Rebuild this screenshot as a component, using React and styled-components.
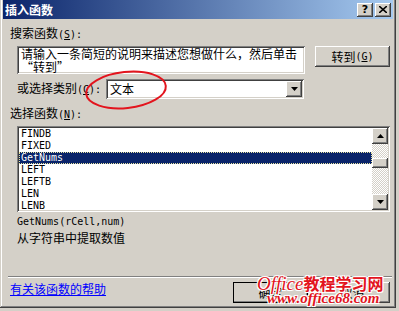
import React from 'react'
import styled, { createGlobalStyle } from 'styled-components'

const GlobalStyle = createGlobalStyle`
  html, body {
    margin: 0;
    padding: 0;
    background: #d4d0c8;
  }
  body {
    font-family: "Noto Sans CJK SC", "Liberation Sans", sans-serif;
    font-size: 12px;
    color: #000;
  }
`

const raised = `
  box-shadow: inset -1px -1px #404040, inset 1px 1px #ffffff,
    inset -2px -2px #808080, inset 2px 2px #d4d0c8;
`

const sunken = `
  box-shadow: inset 1px 1px #808080, inset -1px -1px #ffffff,
    inset 2px 2px #404040, inset -2px -2px #d4d0c8;
`

const Window = styled.div`
  position: relative;
  box-sizing: border-box;
  width: 396px;
  height: 308px;
  padding: 0 3px 3px 3px;
  background: #d4d0c8;
  box-shadow: inset -1px -1px #404040, inset 1px 0 #d4d0c8,
    inset -2px -2px #808080, inset 2px 0 #ffffff;
  overflow: hidden;
`

const TitleBar = styled.div`
  display: flex;
  align-items: center;
  height: 19px;
  padding: 0 2px;
  background: linear-gradient(to right, #0a246a, #a6caf0);
`

const Title = styled.div`
  flex: 1;
  color: #fff;
  font-weight: bold;
  font-size: 12px;
  line-height: 12px;
`

const CapButton = styled.div`
  box-sizing: border-box;
  width: 16px;
  height: 14px;
  margin-left: ${p => (p.$gap ? '2px' : '0')};
  background: #d4d0c8;
  ${raised}
  display: flex;
  align-items: center;
  justify-content: center;
  font-family: "DejaVu Sans", sans-serif;
  font-weight: bold;
  font-size: 11px;
  line-height: 11px;
  color: #000;
`

const Body = styled.div`
  display: flex;
  flex-direction: column;
  padding: 0 3px 0 7px;
`

const Label = styled.div`
  height: 12px;
  line-height: 12px;
  margin-top: ${p => p.$top || 0}px;
  white-space: nowrap;
`

const Latin = styled.span`
  font-family: "DejaVu Sans Mono", "Liberation Mono", monospace;
  font-size: 10px;
`

const Key = styled.u`
  text-underline-offset: 1px;
`

const SearchRow = styled.div`
  display: flex;
  align-items: flex-start;
  margin-top: 7px;
  padding-left: 7px;
`

const SearchBox = styled.div`
  box-sizing: border-box;
  width: 288px;
  height: 28px;
  padding: 1px 3px 0 4px;
  background: #fff;
  ${sunken}
  line-height: 13px;
  white-space: nowrap;
  overflow: hidden;
`

const Button = styled.div`
  box-sizing: border-box;
  width: 75px;
  height: 21px;
  margin-left: ${p => p.$left || 0}px;
  background: #d4d0c8;
  ${raised}
  ${p => p.$default && 'outline: 1px solid #000; outline-offset: -1px;'}
  display: flex;
  align-items: center;
  justify-content: center;
  line-height: 12px;
  white-space: nowrap;
`

const CategoryRow = styled.div`
  display: flex;
  align-items: center;
  margin-top: 5px;
  padding-left: 7px;
  height: 20px;
`

const CategoryLabel = styled.div`
  width: 89px;
  line-height: 12px;
  white-space: nowrap;
`

const Select = styled.div`
  box-sizing: border-box;
  display: flex;
  align-items: center;
  width: 198px;
  height: 20px;
  padding: 2px 2px 2px 4px;
  background: #fff;
  ${sunken}
`

const SelectValue = styled.div`
  flex: 1;
  line-height: 12px;
`

const ArrowButton = styled.div`
  box-sizing: border-box;
  width: 16px;
  height: 16px;
  background: #d4d0c8;
  ${raised}
  display: flex;
  align-items: center;
  justify-content: center;
`

const List = styled.div`
  box-sizing: border-box;
  display: flex;
  width: 373px;
  height: 86px;
  margin: 7px 0 0 7px;
  padding: 2px;
  background: #fff;
  ${sunken}
`

const Items = styled.div`
  flex: 1;
  overflow: hidden;
`

const Item = styled.div`
  box-sizing: border-box;
  height: 12px;
  padding-left: 2px;
  font-family: "DejaVu Sans Mono", "Liberation Mono", monospace;
  font-size: 10px;
  line-height: 12px;
  color: ${p => (p.$selected ? '#fff' : '#000')};
  background: ${p => (p.$selected ? '#0a246a' : 'transparent')};
  ${p => p.$selected && 'outline: 1px dotted #e8e4a0; outline-offset: -1px;'}
`

const ScrollBar = styled.div`
  display: flex;
  flex-direction: column;
  width: 16px;
  background-color: #ffffff;
  background-image: repeating-conic-gradient(#d4d0c8 0 25%, #ffffff 0 50%);
  background-size: 2px 2px;
`

const ScrollButton = styled.div`
  box-sizing: border-box;
  width: 16px;
  height: 16px;
  background: #d4d0c8;
  ${raised}
  display: flex;
  align-items: center;
  justify-content: center;
`

const Thumb = styled.div`
  box-sizing: border-box;
  width: 16px;
  height: 10px;
  margin-top: 14px;
  background: #d4d0c8;
  ${raised}
`

const Track = styled.div`
  flex: 1;
`

const Syntax = styled.div`
  margin: 4px 0 0 7px;
  height: 12px;
  font-family: "DejaVu Sans Mono", "Liberation Mono", monospace;
  font-size: 10px;
  line-height: 12px;
`

const Description = styled.div`
  margin: 4px 0 0 7px;
  height: 12px;
  line-height: 12px;
`

const Separator = styled.div`
  height: 1px;
  margin: 32px -2px 0 -2px;
  border-top: 1px solid #808080;
  border-bottom: 1px solid #ffffff;
  height: 0;
`

const Footer = styled.div`
  display: flex;
  align-items: flex-start;
  margin-top: 4px;
`

const HelpLink = styled.a`
  flex: 1;
  margin-top: 1px;
  color: #0000ff;
  text-decoration: underline;
  text-underline-offset: 1px;
  line-height: 12px;
  cursor: pointer;
`

const Ring = styled.svg`
  position: absolute;
  left: 82px;
  top: 68px;
  pointer-events: none;
`

const Watermark = styled.div`
  position: absolute;
  left: 257px;
  top: 276px;
  color: #e3141d;
  text-shadow: -1px -1px 0 #fff, 1px -1px 0 #fff, -1px 1px 0 #fff, 1px 1px 0 #fff;
  white-space: nowrap;
  pointer-events: none;
`

const MarkTop = styled.div`
  display: flex;
  align-items: baseline;
  line-height: 14px;
`

const MarkOffice = styled.span`
  font-family: "Liberation Serif", serif;
  font-style: italic;
  font-size: 19px;
`

const MarkCn = styled.span`
  font-family: "Noto Sans CJK SC", sans-serif;
  font-weight: bold;
  font-size: 16px;
  letter-spacing: 0px;
`

const MarkUrl = styled.div`
  margin: 0 0 0 10px;
  font-family: "Liberation Serif", serif;
  font-style: italic;
  font-weight: bold;
  font-size: 15px;
  line-height: 14px;
`

const Triangle = ({ down }) => (
  <svg width='7' height='4' viewBox='0 0 7 4'>
    <path d={down ? 'M0 0h7L3.5 4z' : 'M3.5 0L7 4H0z'} fill='#000' />
  </svg>
)

const functions = ['FINDB', 'FIXED', 'GetNums', 'LEFT', 'LEFTB', 'LEN', 'LENB']

export default function App () {
  return (
    <>
      <GlobalStyle />
      <Window>
        <TitleBar>
          <Title>插入函数</Title>
          <CapButton>?</CapButton>
          <CapButton $gap>
            <svg width='8' height='7' viewBox='0 0 8 7'>
              <path d='M0 0l8 7M8 0L0 7' stroke='#000' strokeWidth='1.6' />
            </svg>
          </CapButton>
        </TitleBar>
        <Body>
          <Label $top={8}>
            搜索函数<Latin>(<Key>S</Key>):</Latin>
          </Label>
          <SearchRow>
            <SearchBox>
              请输入一条简短的说明来描述您想做什么，然后单击
              <br />
              “转到”
            </SearchBox>
            <Button $left={10}>
              转到<Latin>(<Key>G</Key>)</Latin>
            </Button>
          </SearchRow>
          <CategoryRow>
            <CategoryLabel>
              或选择类别<Latin>(<Key>C</Key>):</Latin>
            </CategoryLabel>
            <Select>
              <SelectValue>文本</SelectValue>
              <ArrowButton>
                <Triangle down />
              </ArrowButton>
            </Select>
          </CategoryRow>
          <Label $top={8}>
            选择函数<Latin>(<Key>N</Key>):</Latin>
          </Label>
          <List>
            <Items>
              {functions.map(name => (
                <Item key={name} $selected={name === 'GetNums'}>
                  {name}
                </Item>
              ))}
            </Items>
            <ScrollBar>
              <ScrollButton>
                <Triangle />
              </ScrollButton>
              <Thumb />
              <Track />
              <ScrollButton>
                <Triangle down />
              </ScrollButton>
            </ScrollBar>
          </List>
          <Syntax>GetNums(rCell,num)</Syntax>
          <Description>从字符串中提取数值</Description>
          <Separator />
          <Footer>
            <HelpLink>有关该函数的帮助</HelpLink>
            <Button $default>确定</Button>
            <Button $left={7}>取消</Button>
          </Footer>
        </Body>
        <Ring width='88' height='44' viewBox='0 0 88 44'>
          <ellipse
            cx='44'
            cy='22'
            rx='40'
            ry='18'
            fill='none'
            stroke='#e3141d'
            strokeWidth='2'
            transform='rotate(-6 44 22)'
          />
        </Ring>
        <Watermark>
          <MarkTop>
            <MarkOffice>Office</MarkOffice>
            <MarkCn>教程学习网</MarkCn>
          </MarkTop>
          <MarkUrl>www.office68.com</MarkUrl>
        </Watermark>
      </Window>
    </>
  )
}
